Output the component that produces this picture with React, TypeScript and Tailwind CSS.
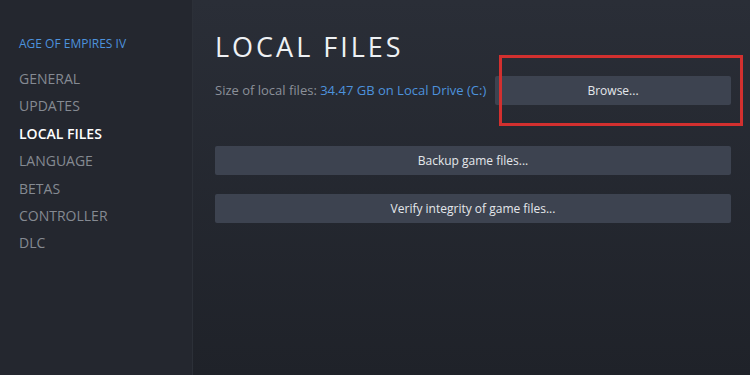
import React from 'react'

const navItems = ['GENERAL', 'UPDATES', 'LOCAL FILES', 'LANGUAGE', 'BETAS', 'CONTROLLER', 'DLC']

function ActionButton({ label }: { label: string }) {
  return (
    <button className="w-full h-[29px] rounded-[2px] bg-[#3d4350] text-[#e4e7eb] text-[12px] flex items-center justify-center">
      {label}
    </button>
  )
}

export default function App() {
  return (
    <div
      className="w-[750px] h-[375px] flex overflow-hidden"
      style={{ fontFamily: '"Open Sans", "Noto Sans", Arial, sans-serif' }}
    >
      <aside className="w-[193px] shrink-0 bg-[#24272f] border-r border-[#2c3038] pt-[35px] pl-[19px]">
        <div className="text-[12px] text-[#4d92dd] h-[18px] leading-[18px]">AGE OF EMPIRES IV</div>
        <ul className="mt-[12px] flex flex-col">
          {navItems.map(item => (
            <li
              key={item}
              className={
                'h-[27.4px] leading-[27.4px] text-[14px] ' +
                (item === 'LOCAL FILES' ? 'text-white font-semibold' : 'text-[#858a92]')
              }
            >
              {item}
            </li>
          ))}
        </ul>
      </aside>

      <main className="flex-1 bg-gradient-to-b from-[#2a2e37] to-[#1f2229] pl-[22px] pr-[19px] pt-[29px]">
        <h1 className="text-[27px] leading-[36px] tracking-[3px] text-[#eef1f4] font-normal">LOCAL FILES</h1>
        <div className="mt-[11px] flex items-center relative">
          <div className="text-[13px] text-[#8b9099] w-[280px] shrink-0 whitespace-nowrap">
            Size of local files: <span className="text-[#4d92dd]">34.47 GB on Local Drive (C:)</span>
          </div>
          <ActionButton label="Browse..." />
          <div className="absolute left-[284px] -right-[12px] -top-[21px] h-[71px] border-[3px] border-[#d2302f] pointer-events-none" />
        </div>
        <div className="mt-[41px] flex flex-col gap-[19px]">
          <ActionButton label="Backup game files..." />
          <ActionButton label="Verify integrity of game files..." />
        </div>
      </main>
    </div>
  )
}
